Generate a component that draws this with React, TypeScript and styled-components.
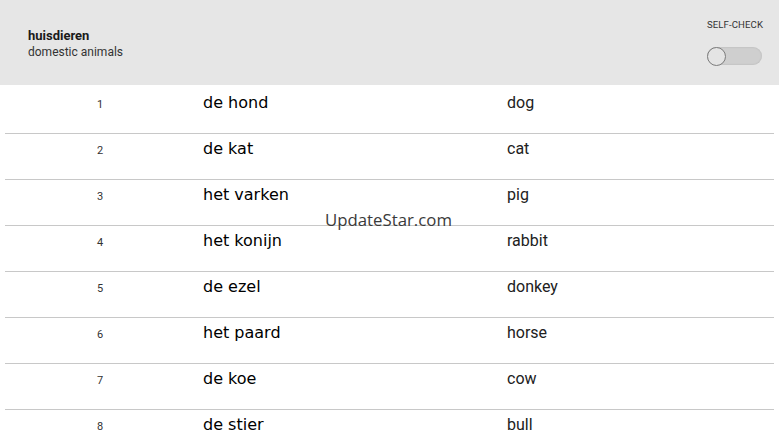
import React from "react";
import styled, { createGlobalStyle } from "styled-components";

const GlobalStyle = createGlobalStyle`
  html, body {
    margin: 0;
    padding: 0;
    background: #ffffff;
    font-family: Roboto, "Noto Sans", sans-serif;
    overflow: hidden;
  }
`;

const Page = styled.div`
  position: relative;
  width: 779px;
  height: 438px;
  overflow: hidden;
  background: #ffffff;
`;

const Header = styled.header`
  display: flex;
  align-items: center;
  justify-content: space-between;
  height: 85px;
  padding: 0 16px 0 28px;
  box-sizing: border-box;
  background: #e6e6e6;
`;

const Titles = styled.div`
  display: flex;
  flex-direction: column;
  gap: 2px;
  margin-top: 1px;
`;

const Title = styled.div`
  font-size: 13px;
  font-weight: 700;
  color: #1a1a1a;
`;

const Subtitle = styled.div`
  font-size: 12px;
  color: #333333;
`;

const CheckBox = styled.div`
  display: flex;
  flex-direction: column;
  align-items: center;
  gap: 17px;
  margin-top: -1px;
`;

const CheckLabel = styled.div`
  font-size: 9.6px;
  letter-spacing: 0.1px;
  color: #333333;
`;

const Track = styled.div`
  display: flex;
  align-items: center;
  width: 55px;
  height: 18px;
  border-radius: 9px;
  background: #cfcfcf;
  box-shadow: inset 0 0 2px rgba(0, 0, 0, 0.15);
`;

const Thumb = styled.div`
  width: 19px;
  height: 19px;
  box-sizing: border-box;
  border-radius: 50%;
  background: #e4e4e4;
  border: 1.5px solid #7c7c7c;
`;

const List = styled.div`
  display: flex;
  flex-direction: column;
  padding: 3px 5px 0 5px;
`;

const Row = styled.div`
  display: grid;
  grid-template-columns: 198px 304px 1fr;
  align-items: start;
  height: 46px;
  box-sizing: border-box;
  padding-top: 5px;
  border-bottom: 1px solid #c8c8c8;
`;

const Num = styled.div`
  text-align: center;
  font-size: 11px;
  color: #333333;
  padding: 5px 8px 0 0;
`;

const Dutch = styled.div`
  font-family: "DejaVu Sans", sans-serif;
  font-size: 16px;
  color: #000000;
`;

const English = styled.div`
  font-family: Roboto, sans-serif;
  font-size: 16px;
  color: #212121;
`;

const Watermark = styled.div`
  position: absolute;
  left: 325px;
  top: 208px;
  font-family: "Open Sans", sans-serif;
  font-size: 16.8px;
  color: #3a3a3a;
  pointer-events: none;
`;

const words: [string, string][] = [
  ["de hond", "dog"],
  ["de kat", "cat"],
  ["het varken", "pig"],
  ["het konijn", "rabbit"],
  ["de ezel", "donkey"],
  ["het paard", "horse"],
  ["de koe", "cow"],
  ["de stier", "bull"],
];

export default function App() {
  return (
    <Page>
      <GlobalStyle />
      <Header>
        <Titles>
          <Title>huisdieren</Title>
          <Subtitle>domestic animals</Subtitle>
        </Titles>
        <CheckBox>
          <CheckLabel>SELF-CHECK</CheckLabel>
          <Track>
            <Thumb />
          </Track>
        </CheckBox>
      </Header>
      <List>
        {words.map(([nl, en], i) => (
          <Row key={nl}>
            <Num>{i + 1}</Num>
            <Dutch>{nl}</Dutch>
            <English>{en}</English>
          </Row>
        ))}
      </List>
      <Watermark>UpdateStar.com</Watermark>
    </Page>
  );
}
